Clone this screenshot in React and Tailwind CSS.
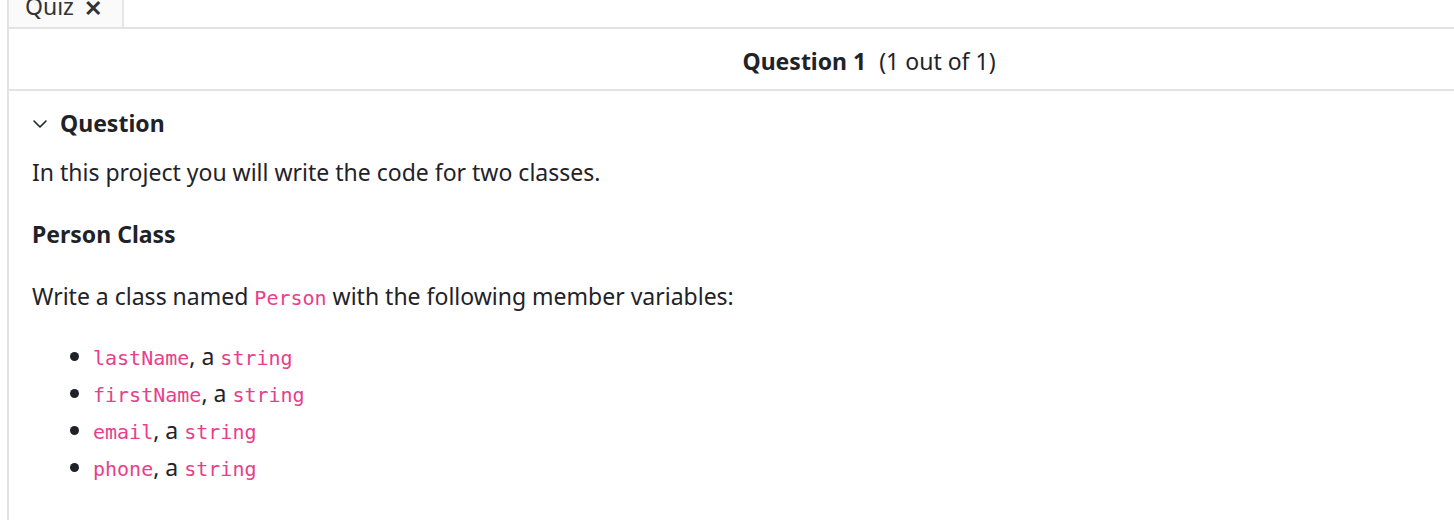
const FIELDS = ["lastName", "firstName", "email", "phone"]

function Code({ children }) {
  return (
    <code className="text-[#e83e8c] text-[20px]" style={{ fontFamily: "'DejaVu Sans Mono', 'Liberation Mono', monospace" }}>
      {children}
    </code>
  )
}

export default function App() {
  return (
    <div
      className="w-full h-[520px] overflow-hidden bg-white text-[#1f2328]"
      style={{ fontFamily: "'Noto Sans', 'Open Sans', sans-serif" }}
    >
      <div className="w-[1722px] ml-[7px] h-full border-l-2 border-[#e3e3e3] flex flex-col">
        <div className="flex">
          <div className="-mt-[14px] h-[41px] w-[115px] bg-[#fafafa] border-r-2 border-[#e6e6e6] flex items-center pl-[16px] gap-[10px] text-[23px] text-[#333]">
            <span>Quiz</span>
            <span className="text-[22px] font-bold leading-none">✕</span>
          </div>
        </div>
        <div className="h-[64px] border-t-2 border-b-2 border-[#e3e3e3] flex items-center justify-center pt-[5px] text-[23px]">
          <span className="font-bold">Question 1</span>
          <span className="ml-[13px]">(1 out of 1)</span>
        </div>
        <div className="pl-[23px] pt-[16px] text-[23px] leading-[32px]">
          <div className="flex items-center gap-[13px]">
            <svg viewBox="0 0 14 8" className="w-[14px] h-[8px] ml-[1px] mt-[2px]" fill="none" stroke="currentColor" strokeWidth="1.6" strokeLinecap="round" strokeLinejoin="round">
              <path d="M1 1l6 6 6-6" />
            </svg>
            <span className="font-bold">Question</span>
          </div>
          <p className="mt-[17px]">In this project you will write the code for two classes.</p>
          <p className="mt-[30px] font-bold">Person Class</p>
          <p className="mt-[30px]">
            Write a class named <Code>Person</Code> with the following member variables:
          </p>
          <ul className="mt-[24px] pl-[38px] flex flex-col">
            {FIELDS.map((f) => (
              <li key={f} className="flex items-center h-[37px]">
                <span className="w-[9px] h-[9px] rounded-full bg-[#1f2328] mr-[14px]" />
                <span>
                  <Code>{f}</Code>, a <Code>string</Code>
                </span>
              </li>
            ))}
          </ul>
        </div>
      </div>
    </div>
  )
}
